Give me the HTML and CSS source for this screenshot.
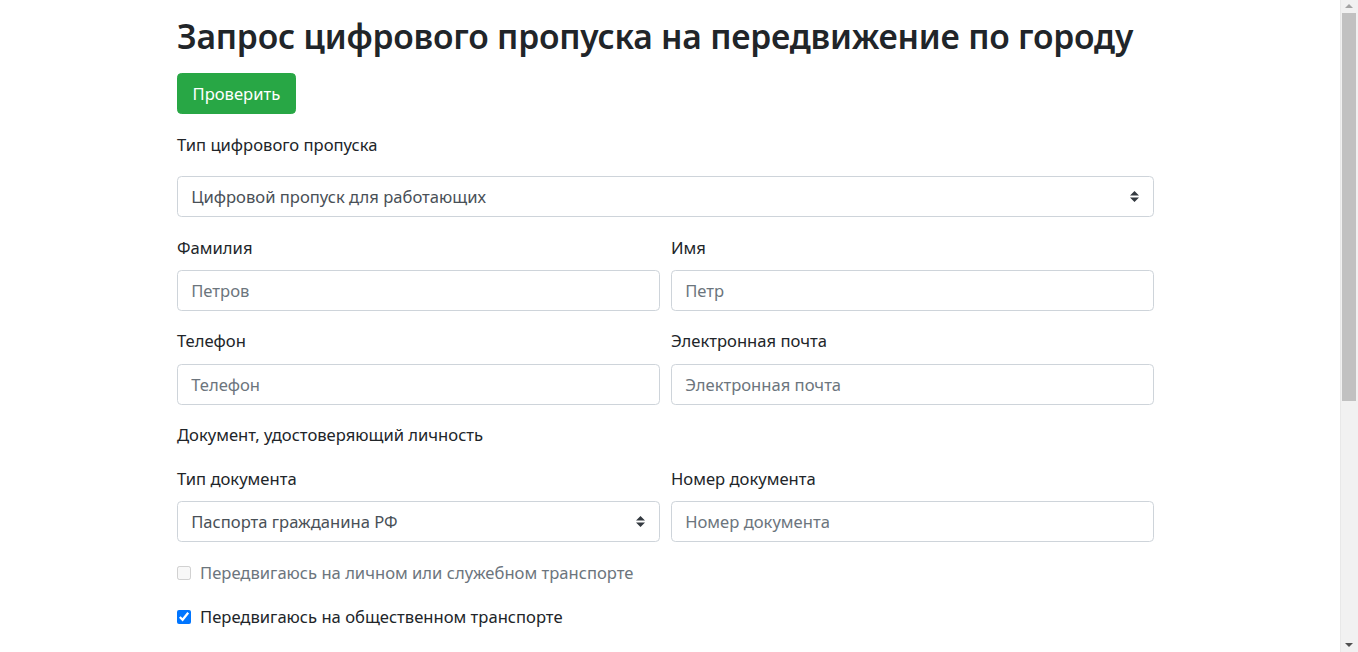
FILE: index.html
```html
<!DOCTYPE html>
<html lang="ru">
<head>
<meta charset="utf-8">
<title>Запрос цифрового пропуска</title>
<link rel="stylesheet" href="styles.css">
</head>
<body>
<main class="page">
  <h1 class="title">Запрос цифрового пропуска на передвижение по городу</h1>
  <button class="btn-check" type="button">Проверить</button>
  <p class="section">Тип цифрового пропуска</p>
  <select class="control select wide">
    <option>Цифровой пропуск для работающих</option>
  </select>
  <div class="row">
    <div class="group">
      <label class="label">Фамилия</label>
      <input class="control" type="text" placeholder="Петров">
    </div>
    <div class="group">
      <label class="label">Имя</label>
      <input class="control" type="text" placeholder="Петр">
    </div>
  </div>
  <div class="row">
    <div class="group">
      <label class="label">Телефон</label>
      <input class="control" type="text" placeholder="Телефон">
    </div>
    <div class="group">
      <label class="label">Электронная почта</label>
      <input class="control" type="text" placeholder="Электронная почта">
    </div>
  </div>
  <p class="section">Документ, удостоверяющий личность</p>
  <div class="row">
    <div class="group">
      <label class="label">Тип документа</label>
      <select class="control select">
        <option>Паспорта гражданина РФ</option>
      </select>
    </div>
    <div class="group">
      <label class="label">Номер документа</label>
      <input class="control" type="text" placeholder="Номер документа">
    </div>
  </div>
  <label class="check disabled"><input type="checkbox" disabled> <span>Передвигаюсь на личном или служебном транспорте</span></label>
  <label class="check"><input type="checkbox" checked> <span>Передвигаюсь на общественном транспорте</span></label>
</main>
<div class="scrollbar">
  <div class="sb-up"></div>
  <div class="sb-thumb"></div>
  <div class="sb-down"></div>
</div>
</body>
</html>
```

FILE: styles.css
```css
* { box-sizing: border-box; }
html, body { margin: 0; padding: 0; background: #fff; }
body {
  font-family: "Noto Sans", "Open Sans", sans-serif;
  font-size: 16.6px;
  line-height: 26.4px;
  color: #212529;
  overflow: hidden;
}
.page {
  width: 977px;
  margin-left: 177px;
  padding-top: 10px;
}
.title {
  font-size: 33.6px;
  line-height: 52.8px;
  font-weight: 600;
  letter-spacing: -0.2px;
  margin: 0 0 9.8px;
  color: #212529;
  white-space: nowrap;
}
.btn-check {
  display: block;
  height: 41.8px;
  padding: 0 14.5px;
  font-family: inherit;
  font-size: 16.6px;
  color: #fff;
  background: #28a745;
  border: 1px solid #28a745;
  border-radius: 4.4px;
  margin-bottom: 17.6px;
}
.section {
  margin: 0 0 17.6px;
}
.control {
  display: block;
  width: 100%;
  height: 41px;
  padding: 0 13.2px;
  font-family: inherit;
  font-size: 16.6px;
  color: #495057;
  background: #fff;
  border: 1px solid #ced4da;
  border-radius: 4.4px;
  outline: none;
}
.control::placeholder { color: #6c757d; opacity: 1; }
.select {
  appearance: none;
  -webkit-appearance: none;
  background: #fff url("data:image/svg+xml,%3csvg xmlns='http://www.w3.org/2000/svg' width='4' height='5' viewBox='0 0 4 5'%3e%3cpath fill='%23343a40' d='M2 0L0 2h4zm0 5L0 3h4z'/%3e%3c/svg%3e") no-repeat right 14px center / 8.8px 11px;
  padding-right: 34px;
}
.wide { margin-bottom: 17.6px; }
.row {
  display: grid;
  grid-template-columns: 1fr 1fr;
  column-gap: 11px;
  margin-bottom: 17.6px;
}
.label {
  display: block;
  margin-bottom: 8.8px;
}
.check {
  display: flex;
  align-items: center;
  gap: 9px;
  margin-bottom: 17.6px;
}
.check input {
  width: 14px;
  height: 14px;
  margin: 0;
  flex: none;
}
.check.disabled { color: #6c757d; }
.scrollbar {
  position: fixed;
  top: 0;
  right: 0;
  width: 18px;
  height: 100%;
  background: #f1f1f1;
  border-left: 1px solid #e8e8e8;
}
.sb-up {
  position: absolute;
  top: 4px;
  left: 4px;
  width: 0; height: 0;
  border-left: 4px solid transparent;
  border-right: 4px solid transparent;
  border-bottom: 4px solid #a3a3a3;
}
.sb-thumb {
  position: absolute;
  top: 13px;
  left: 1px;
  width: 14px;
  height: 388px;
  background: #c1c1c1;
}
.sb-down {
  position: absolute;
  bottom: 5px;
  left: 4px;
  width: 0; height: 0;
  border-left: 4px solid transparent;
  border-right: 4px solid transparent;
  border-top: 4px solid #505050;
}
```
